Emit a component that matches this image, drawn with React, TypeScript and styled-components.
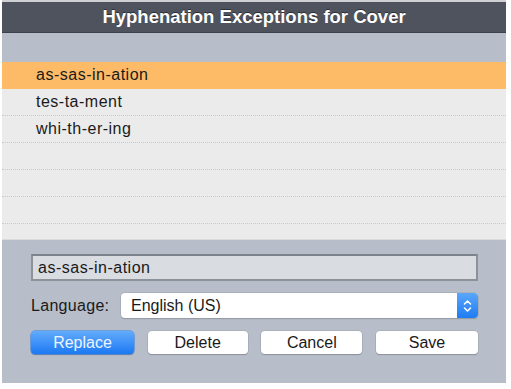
import styled, { createGlobalStyle } from "styled-components";

const Global = createGlobalStyle`
    html, body {
        margin: 0;
        padding: 0;
        background: #ffffff;
    }
    body {
        font-family: "Liberation Sans", Arial, sans-serif;
        width: 511px;
        height: 389px;
        overflow: hidden;
    }
`;

const Window = styled.div`
    margin-left: 2px;
    width: 504px;
    height: 383px;
    display: flex;
    flex-direction: column;
    background: #b7bec9;
    border-top: 2px solid #cfd0d3;
    box-sizing: border-box;
`;

const TitleBar = styled.div`
    height: 30px;
    flex: none;
    background: #4f535e;
    color: #ffffff;
    font-size: 18.5px;
    font-weight: bold;
    display: flex;
    align-items: center;
    justify-content: center;
    text-shadow: 0 -1px 0 #2c2f36;
    border-bottom: 1px solid #3e414a;
`;

const HeaderStrip = styled.div`
    height: 29px;
    flex: none;
    background: #b7bec9;
`;

const List = styled.div`
    height: 177px;
    flex: none;
    background: #ebebeb;
    overflow: hidden;
    border-bottom: 1px solid #d9dbde;
`;

const Row = styled.div<{ $selected?: boolean }>`
    height: 27px;
    box-sizing: border-box;
    padding-left: 34px;
    display: flex;
    align-items: center;
    font-size: 16px;
    letter-spacing: 0.5px;
    color: #1a1a1a;
    background: ${(p) => (p.$selected ? "#fdbb67" : "transparent")};
    border-bottom: 1px dotted ${(p) => (p.$selected ? "#fdbb67" : "#c9c9c9")};
`;

const Panel = styled.div`
    flex: 1;
    padding: 14px 28px 0 29px;
    display: flex;
    flex-direction: column;
`;

const Field = styled.div`
    height: 27px;
    box-sizing: border-box;
    background: #d9dce1;
    border: 2px solid #8d9198;
    border-top-color: #7e828a;
    display: flex;
    align-items: center;
    padding-left: 5px;
    font-size: 16px;
    letter-spacing: 0.5px;
    color: #1a1a1a;
`;

const LangRow = styled.div`
    margin-top: 12px;
    height: 25px;
    display: flex;
    align-items: center;
    gap: 11px;
`;

const Label = styled.span`
    font-size: 16px;
    letter-spacing: 0.3px;
    color: #1a1a1a;
    width: 79px;
`;

const Select = styled.div`
    flex: 1;
    height: 25px;
    box-sizing: border-box;
    background: #ffffff;
    border-radius: 4px;
    box-shadow: 0 0 0 0.5px #9ea3ab, 0 1px 1px rgba(0, 0, 0, 0.25);
    display: flex;
    align-items: center;
    overflow: hidden;
`;

const SelectText = styled.span`
    flex: 1;
    padding-left: 10px;
    font-size: 16px;
    color: #1a1a1a;
`;

const Stepper = styled.span`
    width: 21px;
    height: 100%;
    background: linear-gradient(#5aa6fb, #1f7cf2);
    display: flex;
    align-items: center;
    justify-content: center;
`;

const Buttons = styled.div`
    margin-top: 13px;
    display: grid;
    grid-template-columns: 103px 100px 101px 102px;
    justify-content: space-between;
`;

const Button = styled.div<{ $primary?: boolean }>`
    height: 23px;
    border-radius: 4px;
    display: flex;
    align-items: center;
    justify-content: center;
    font-size: 16px;
    color: ${(p) => (p.$primary ? "#eef4ff" : "#1a1a1a")};
    background: ${(p) => (p.$primary ? "linear-gradient(#63abfc, #1c79f2)" : "#ffffff")};
    box-shadow: ${(p) =>
        p.$primary
            ? "0 0 0 0.5px #2f7fe6, 0 1px 1px rgba(0, 0, 0, 0.3)"
            : "0 0 0 0.5px #9ea3ab, 0 1px 1px rgba(0, 0, 0, 0.3)"};
`;

const words = ["as-sas-in-ation", "tes-ta-ment", "whi-th-er-ing", "", "", "", ""];

const App = () => {
    return (
        <>
            <Global />
            <Window>
                <TitleBar>Hyphenation Exceptions for Cover</TitleBar>
                <HeaderStrip />
                <List>
                    {words.map((w, i) => (
                        <Row key={i} $selected={i === 0}>{w}</Row>
                    ))}
                </List>
                <Panel>
                    <Field>as-sas-in-ation</Field>
                    <LangRow>
                        <Label>Language:</Label>
                        <Select>
                            <SelectText>English (US)</SelectText>
                            <Stepper>
                                <svg width="9" height="14" viewBox="0 0 9 14" fill="none" stroke="#ffffff" strokeWidth="1.6" strokeLinecap="round" strokeLinejoin="round">
                                    <path d="M1.5 5 L4.5 2 L7.5 5" />
                                    <path d="M1.5 9 L4.5 12 L7.5 9" />
                                </svg>
                            </Stepper>
                        </Select>
                    </LangRow>
                    <Buttons>
                        <Button $primary>Replace</Button>
                        <Button>Delete</Button>
                        <Button>Cancel</Button>
                        <Button>Save</Button>
                    </Buttons>
                </Panel>
            </Window>
        </>
    );
};

export default App;
